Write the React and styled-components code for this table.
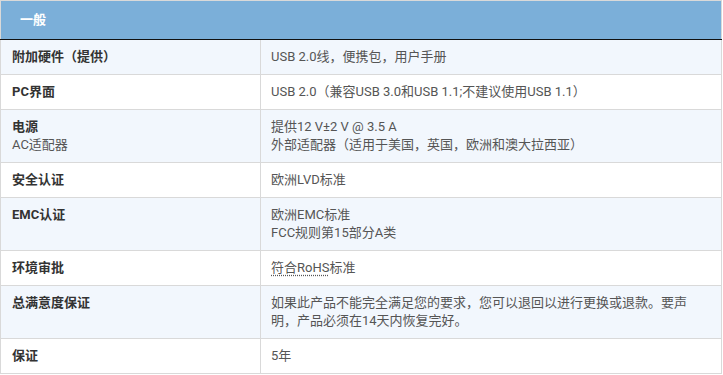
import React from 'react';
import styled, { createGlobalStyle } from 'styled-components';

const GlobalStyle = createGlobalStyle`
  body {
    margin: 0;
    background: #fff;
    font-family: Roboto, "Noto Sans CJK SC", sans-serif;
  }
`;

const rows = [
  { label: '附加硬件（提供）', value: ['USB 2.0线，便携包，用户手册'] },
  { label: 'PC界面', value: ['USB 2.0（兼容USB 3.0和USB 1.1;不建议使用USB 1.1）'] },
  { label: '电源', sub: 'AC适配器', value: ['提供12 V±2 V @ 3.5 A', '外部适配器（适用于美国，英国，欧洲和澳大拉西亚）'] },
  { label: '安全认证', value: ['欧洲LVD标准'] },
  { label: 'EMC认证', value: ['欧洲EMC标准', 'FCC规则第15部分A类'] },
  { label: '环境审批', value: ['rohs'] },
  { label: '总满意度保证', value: ['如果此产品不能完全满足您的要求，您可以退回以进行更换或退款。要声明，产品必须在14天内恢复完好。'] },
  { label: '保证', value: ['5年'] },
];

function App() {
  return (
    <>
      <GlobalStyle />
      <SpecTable>
        <colgroup>
          <LabelCol />
          <col />
        </colgroup>
        <thead>
          <tr>
            <HeadCell colSpan={2}>一般</HeadCell>
          </tr>
        </thead>
        <tbody>
          {rows.map((row, i) => (
            <Row key={row.label} $striped={i % 2 === 0}>
              <LabelCell>
                <strong>{row.label}</strong>
                {row.sub && <Sub>{row.sub}</Sub>}
              </LabelCell>
              <ValueCell>
                {row.value.map((line) =>
                  line === 'rohs' ? (
                    <div key={line}>
                      <Abbr>符合RoHS</Abbr>标准
                    </div>
                  ) : (
                    <div key={line}>{line}</div>
                  )
                )}
              </ValueCell>
            </Row>
          ))}
        </tbody>
      </SpecTable>
    </>
  );
}

export default App;

const SpecTable = styled.table`
  width: 722px;
  border-collapse: collapse;
  border: 1px solid #d9d9d9;
  font-size: 13px;
  line-height: 18px;
  table-layout: fixed;
`;

const LabelCol = styled.col`
  width: 260px;
`;

const HeadCell = styled.th`
  height: 38px;
  padding: 0 0 0 19px;
  background: #7bafd9;
  color: #fff;
  font-weight: 700;
  text-align: left;
  border-bottom: 1px solid #111;
`;

const Row = styled.tr`
  background: ${({ $striped }) => ($striped ? '#f2f7fd' : '#fff')};
`;

const LabelCell = styled.td`
  padding: 8px 11px;
  vertical-align: top;
  color: #333;
  border: 1px solid #d9d9d9;

  strong {
    display: block;
    font-weight: 700;
  }
`;

const Sub = styled.div`
  color: #555;
`;

const ValueCell = styled.td`
  padding: 8px 30px 8px 10px;
  vertical-align: top;
  color: #555;
  border: 1px solid #d9d9d9;
`;

const Abbr = styled.span`
  text-decoration: underline dotted #555;
  text-underline-offset: 3px;
`;
